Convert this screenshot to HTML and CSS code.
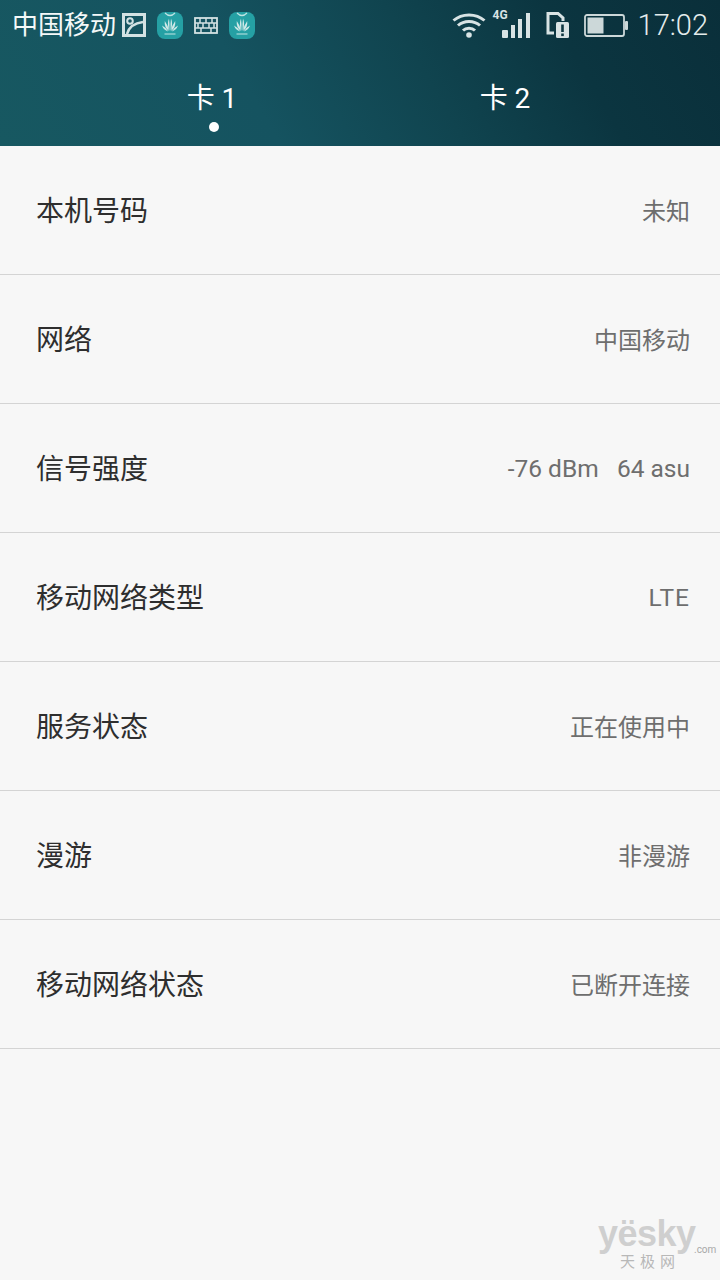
FILE: index.html
```html
<!DOCTYPE html>
<html lang="zh-CN">
<head>
  <meta charset="UTF-8">
  <meta name="viewport" content="width=device-width, initial-scale=1.0">
  <title>SIM 卡状态</title>
  <link rel="stylesheet" href="styles.css">
</head>
<body>
  <div class="phone">
    <div class="app-header">
      <div class="status-bar">
        <div class="status-left">
          <span class="carrier">中国移动</span>
          <svg class="icon-photo" width="24" height="24" viewBox="0 0 24 24">
            <rect x="1.5" y="1.5" width="21" height="21" fill="none" stroke="#d3e2e3" stroke-width="3"/>
            <circle cx="8" cy="8" r="2.8" fill="none" stroke="#d3e2e3" stroke-width="2"/>
            <path d="M5 21 C7 14 12 10 21 9" fill="none" stroke="#d3e2e3" stroke-width="2.6"/>
          </svg>
          <svg class="icon-app" width="26" height="27" viewBox="0 0 26 27">
            <rect x="0" y="0" width="26" height="27" rx="8" fill="#25a0a4"/>
            <path d="M8 1 Q13 6 18 1" fill="none" stroke="#bfe3e3" stroke-width="1.2"/>
            <path d="M12.4 19 Q9.5 12 12 6.5 Q12.9 12 12.4 19 Z M13.6 19 Q16.5 12 14 6.5 Q13.1 12 13.6 19 Z M11.8 19 Q7 15 7.8 9 Q11 13 11.8 19 Z M14.2 19 Q19 15 18.2 9 Q15 13 14.2 19 Z M11.2 19.4 Q6.5 18 5 13.5 Q9 15.5 11.2 19.4 Z M14.8 19.4 Q19.5 18 21 13.5 Q17 15.5 14.8 19.4 Z" fill="#cfe9e8"/>
            <path d="M7.5 22H18.5" stroke="#a9dada" stroke-width="1.2"/>
          </svg>
          <svg class="icon-keys" width="24" height="17" viewBox="0 0 24 17">
            <rect x="1" y="1" width="22" height="15" fill="none" stroke="#d3e2e3" stroke-width="1.8"/>
            <path d="M1 6H23M1 11H23M6 1V6M12 1V6M18 1V6M4 6V11M9 6V11M15 6V11M20 6V11M7 11V16M17 11V16" stroke="#d3e2e3" stroke-width="1.5" fill="none"/>
          </svg>
          <svg class="icon-app" width="26" height="27" viewBox="0 0 26 27">
            <rect x="0" y="0" width="26" height="27" rx="8" fill="#25a0a4"/>
            <path d="M8 1 Q13 6 18 1" fill="none" stroke="#bfe3e3" stroke-width="1.2"/>
            <path d="M12.4 19 Q9.5 12 12 6.5 Q12.9 12 12.4 19 Z M13.6 19 Q16.5 12 14 6.5 Q13.1 12 13.6 19 Z M11.8 19 Q7 15 7.8 9 Q11 13 11.8 19 Z M14.2 19 Q19 15 18.2 9 Q15 13 14.2 19 Z M11.2 19.4 Q6.5 18 5 13.5 Q9 15.5 11.2 19.4 Z M14.8 19.4 Q19.5 18 21 13.5 Q17 15.5 14.8 19.4 Z" fill="#cfe9e8"/>
            <path d="M7.5 22H18.5" stroke="#a9dada" stroke-width="1.2"/>
          </svg>
        </div>
        <div class="status-right">
          <svg class="icon-wifi" width="34" height="26" viewBox="0 0 34 26">
            <path d="M1.5 8.5 C10 1 24 1 32.5 8.5" fill="none" stroke="#d8e3e4" stroke-width="3"/>
            <path d="M6 13.5 C12 8 22 8 28 13.5" fill="none" stroke="#d8e3e4" stroke-width="3"/>
            <path d="M11 18.5 C14 15.5 20 15.5 23 18.5" fill="none" stroke="#d8e3e4" stroke-width="3"/>
            <circle cx="17" cy="23" r="2.8" fill="#d8e3e4"/>
          </svg>
          <div class="signal">
            <span class="net-type">4G</span>
            <svg width="30" height="26" viewBox="0 0 30 26">
              <rect x="0" y="18" width="6" height="8" rx="1" fill="#d8e3e4"/>
              <rect x="9" y="13" width="4" height="13" fill="#d8e3e4"/>
              <rect x="16" y="7" width="4" height="19" fill="#d8e3e4"/>
              <rect x="24" y="1" width="4" height="25" fill="#d8e3e4"/>
            </svg>
          </div>
          <svg class="icon-sim" width="24" height="26" viewBox="0 0 24 26">
            <path d="M8 21H2V1.5H12L17 6V9" fill="none" stroke="#d8e3e4" stroke-width="3"/>
            <rect x="10" y="10" width="13" height="16" rx="1.5" fill="#d8e3e4"/>
            <rect x="15.2" y="12.5" width="2.6" height="7.5" fill="#0d3640"/>
            <rect x="15.2" y="21.5" width="2.6" height="2.6" fill="#0d3640"/>
          </svg>
          <svg class="icon-battery" width="44" height="23" viewBox="0 0 44 23">
            <rect x="1" y="1" width="39" height="21" rx="2" fill="none" stroke="#ccd8d9" stroke-width="1.8"/>
            <rect x="3.5" y="3.5" width="16" height="16" fill="#ccd8d9"/>
            <rect x="41" y="7" width="3" height="9" rx="1" fill="#ccd8d9"/>
          </svg>
          <span class="clock">17:02</span>
        </div>
      </div>
      <div class="tabs">
        <div class="tab tab-active">卡 1</div>
        <div class="tab">卡 2</div>
      </div>
    </div>

    <div class="info-list">
      <div class="info-row"><span class="info-label">本机号码</span><span class="info-value">未知</span></div>
      <div class="info-row"><span class="info-label">网络</span><span class="info-value">中国移动</span></div>
      <div class="info-row"><span class="info-label">信号强度</span><span class="info-value info-latin">-76 dBm&nbsp;&nbsp;&nbsp;64 asu</span></div>
      <div class="info-row"><span class="info-label">移动网络类型</span><span class="info-value info-latin info-lte">LTE</span></div>
      <div class="info-row"><span class="info-label">服务状态</span><span class="info-value">正在使用中</span></div>
      <div class="info-row"><span class="info-label">漫游</span><span class="info-value">非漫游</span></div>
      <div class="info-row"><span class="info-label">移动网络状态</span><span class="info-value">已断开连接</span></div>
    </div>

    <div class="watermark">
      <div class="wm-logo">yësky</div>
      <div class="wm-com">.com</div>
      <div class="wm-cn">天极网</div>
    </div>
  </div>
</body>
</html>
```

FILE: styles.css
```css
* {
  margin: 0;
  padding: 0;
  box-sizing: border-box;
}

body {
  width: 720px;
  height: 1280px;
  overflow: hidden;
  font-family: Roboto, "Noto Sans CJK SC", sans-serif;
  background: #f7f7f7;
  color: #333;
}

.phone {
  position: relative;
  width: 720px;
  height: 1280px;
}

.app-header {
  height: 146px;
  background: linear-gradient(60deg, #175861 0%, #155360 35%, #10444f 58%, #0b3540 78%, #0a2f3a 100%);
  color: #fff;
}

.status-bar {
  height: 50px;
  display: flex;
  justify-content: space-between;
  align-items: center;
  padding: 0 12px;
}

.status-left,
.status-right {
  display: flex;
  align-items: center;
}

.carrier {
  font-size: 26px;
  font-weight: 400;
  color: #f4f8f8;
  line-height: 50px;
}

.icon-photo {
  margin-left: 6px;
}

.icon-app {
  margin-left: 11px;
}

.icon-keys {
  margin-left: 11px;
}

.status-right svg {
  display: block;
}

.signal {
  position: relative;
  margin-left: 16px;
}

.net-type {
  position: absolute;
  left: -9px;
  top: -4px;
  font-size: 12px;
  font-weight: 700;
  color: #d8e3e4;
  line-height: 14px;
}

.icon-sim {
  margin-left: 14px;
}

.icon-battery {
  margin-left: 14px;
}

.clock {
  margin-left: 10px;
  font-size: 29px;
  font-weight: 300;
  color: #e4ecec;
}

.tabs {
  display: flex;
  padding-left: 139px;
  gap: 147px;
}

.tab {
  position: relative;
  width: 146px;
  height: 96px;
  padding-top: 28px;
  text-align: center;
  font-size: 28px;
  font-weight: 400;
  line-height: 42px;
}

.tab-active::after {
  content: "";
  position: absolute;
  left: 70px;
  top: 72px;
  width: 10px;
  height: 10px;
  border-radius: 50%;
  background: #fff;
}

.info-row {
  display: flex;
  justify-content: space-between;
  align-items: center;
  height: 129px;
  padding: 0 30px 3px 36px;
  border-bottom: 1px solid #d4d4d4;
}

.info-label {
  font-size: 28px;
  color: #2e2e2e;
}

.info-value {
  font-size: 24px;
  padding-top: 2px;
  color: #6e6e6e;
}

.info-latin {
  font-size: 24.5px;
  padding-top: 4px;
}

.info-lte {
  letter-spacing: 1px;
}

.watermark {
  position: absolute;
  left: 598px;
  top: 1216px;
  width: 116px;
  height: 56px;
  color: #cfcfcf;
}

.wm-logo {
  display: inline-block;
  vertical-align: top;
  font-family: "Liberation Sans", sans-serif;
  font-size: 36px;
  font-weight: 700;
  line-height: 36px;
  letter-spacing: -0.5px;
}

.wm-com {
  position: absolute;
  left: 96px;
  top: 28px;
  font-size: 10px;
  line-height: 12px;
  color: #a8a8a8;
}

.wm-cn {
  margin-top: 2px;
  font-size: 15px;
  line-height: 16px;
  letter-spacing: 5px;
  padding-left: 22px;
  color: #b8b8b8;
}
```
